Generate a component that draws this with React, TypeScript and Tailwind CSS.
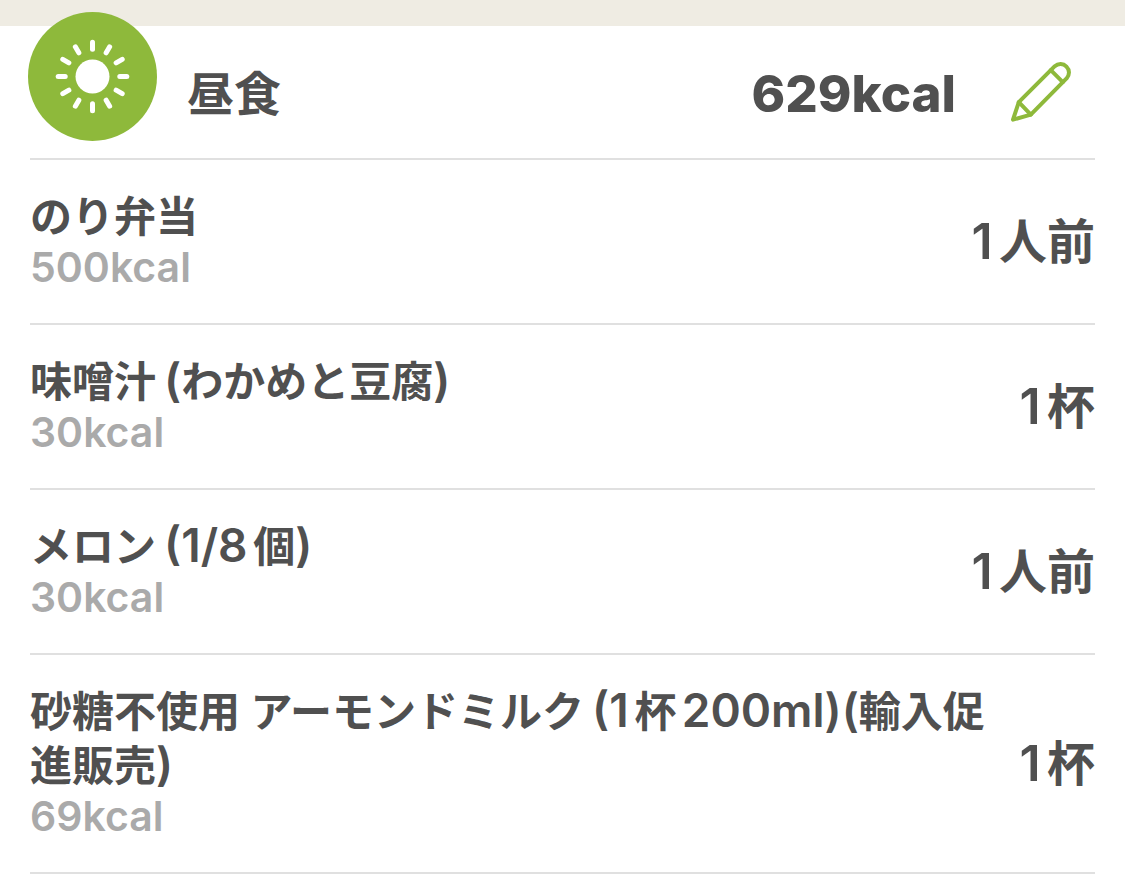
type Food = {
  name: string;
  note?: string;
  kcal: number;
  amount: string;
};

const foods: Food[] = [
  { name: "のり弁当", kcal: 500, amount: "1人前" },
  { name: "味噌汁", note: "(わかめと豆腐)", kcal: 30, amount: "1杯" },
  { name: "メロン", note: "(1/8個)", kcal: 30, amount: "1人前" },
  {
    name: "砂糖不使用 アーモンドミルク",
    note: "(1杯200ml)(輸入促進販売)",
    kcal: 69,
    amount: "1杯",
  },
];

const rayAngles = [0, 30, 60, 90, 120, 150, 180, 210, 240, 270, 300, 330];

function SunBadge() {
  return (
    <svg viewBox="0 0 129 129" className="-mt-3.5 size-[129px] shrink-0" aria-hidden="true">
      <circle cx="64.5" cy="64.5" r="64.5" fill="#8eb93b" />
      <circle cx="64.5" cy="64.5" r="17" fill="#fff" />
      <g stroke="#fff" strokeWidth="5" strokeLinecap="round">
        {rayAngles.map((angle) => (
          <line key={angle} x1="64.5" y1="30.2" x2="64.5" y2="37.2" transform={`rotate(${angle} 64.5 64.5)`} />
        ))}
      </g>
    </svg>
  );
}

function PencilIcon() {
  return (
    <svg
      viewBox="0 0 62 62"
      className="size-[62px]"
      fill="none"
      stroke="#8eb93b"
      strokeWidth="4"
      strokeLinejoin="round"
      strokeLinecap="round"
      aria-hidden="true"
    >
      <path d="M3 58.7 8.8 41.2 44.8 5.2A8.5 8.5 0 0 1 56.8 17.2L20.8 53.6Z" />
      <path d="M8.8 41.2 20.8 53.6M40.8 9.2 52.8 21.2" />
    </svg>
  );
}

/** Sets Latin letters, digits and brackets slightly larger than the Japanese text around them. */
function MixedText({ text, latinClass }: { text: string; latinClass: string }) {
  return text
    .split(/([!-~]+)/)
    .filter(Boolean)
    .map((run, index) =>
      /^[!-~]/.test(run) ? (
        <span key={index} className={latinClass}>
          {run}
        </span>
      ) : (
        run
      ),
    );
}

function FoodRow({ food }: { food: Food }) {
  return (
    <li className="flex items-center justify-between gap-6 border-b-2 border-[#e0e0e0] pt-[30px] pb-[33px]">
      <div className="min-w-0 font-semibold">
        <h2 className="text-[42px] leading-[54px]">
          {food.name}
          {food.note && (
            <span className="ml-2">
              <MixedText text={food.note} latinClass="text-[46px] leading-none" />
            </span>
          )}
        </h2>
        <p className="text-[41px] leading-[46px] text-[#aaaaaa]">{food.kcal}kcal</p>
      </div>
      <p className="shrink-0 pt-1 text-[48px] leading-[54px] font-semibold">
        <MixedText text={food.amount} latinClass="text-[50px] leading-none" />
      </p>
    </li>
  );
}

export default function App() {
  const total = foods.reduce((sum, food) => sum + food.kcal, 0);

  return (
    <main
      lang="ja"
      className="min-h-screen border-t-[26px] border-[#efece3] bg-white font-['Inter','Noto_Sans_CJK_JP',sans-serif] text-[#505050] [text-autospace:normal]"
    >
      <header className="mx-[30px] flex h-[134px] items-center border-b-2 border-[#e0e0e0]">
        <div className="-ml-0.5 self-start">
          <SunBadge />
        </div>
        <h1 className="ml-[30px] pt-1 text-[47px] font-bold">昼食</h1>
        <p className="ml-auto pt-1 text-[51px] font-extrabold">{total}kcal</p>
        <button type="button" aria-label="編集" className="mr-[23px] ml-[54px] cursor-pointer">
          <PencilIcon />
        </button>
      </header>
      <ul className="mx-[30px]">
        {foods.map((food) => (
          <FoodRow key={food.name} food={food} />
        ))}
      </ul>
    </main>
  );
}
